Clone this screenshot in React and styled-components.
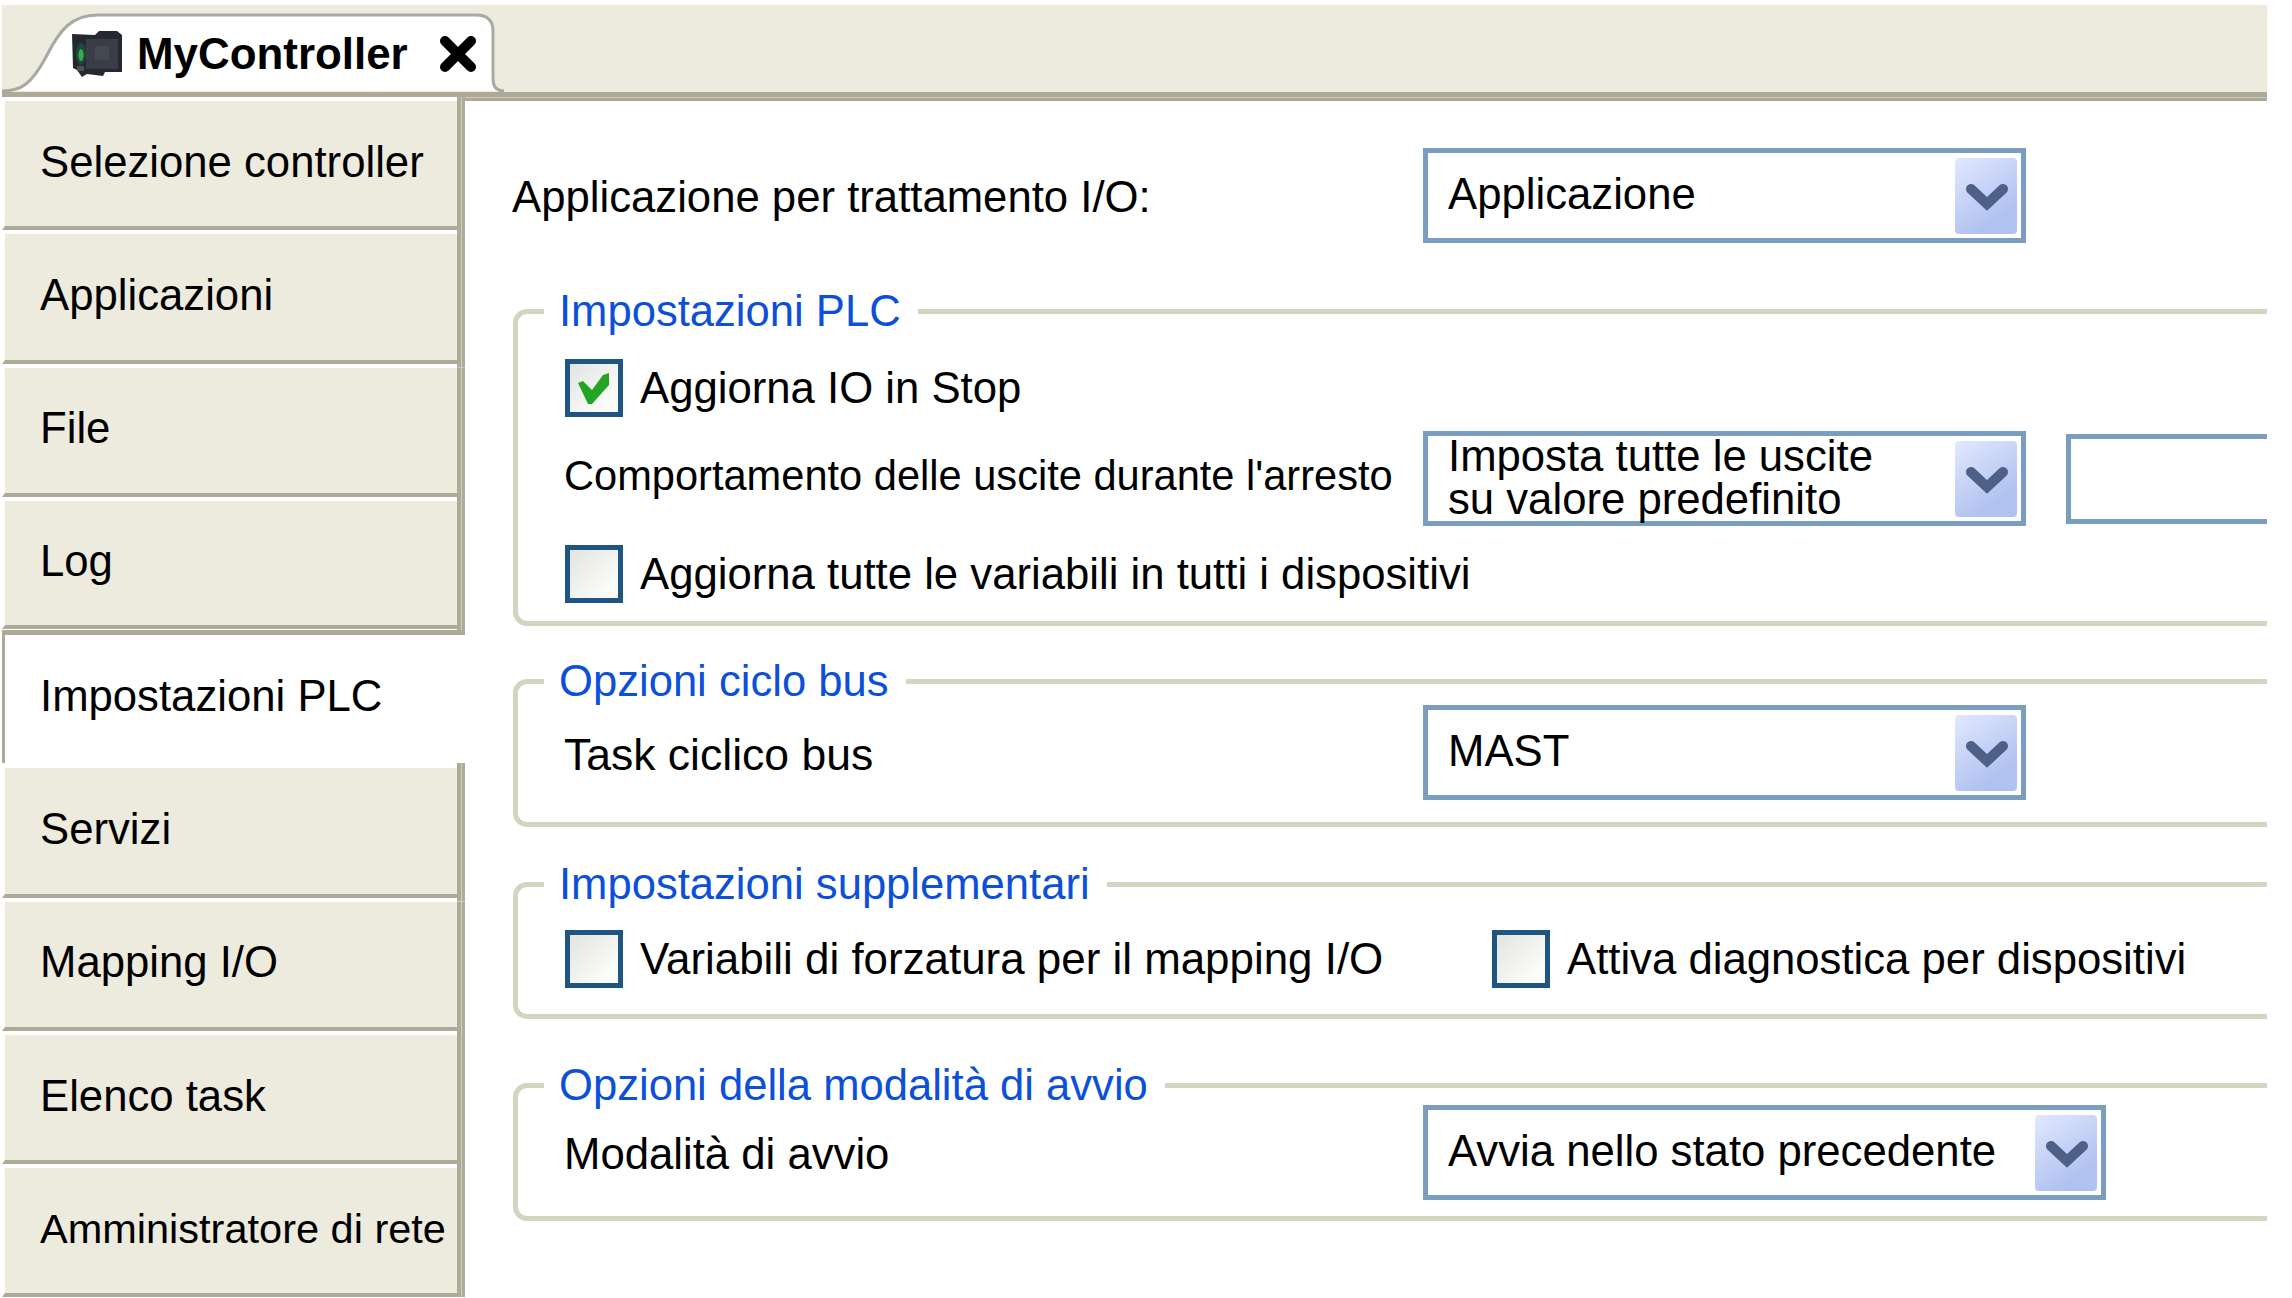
import React from "react";
import styled, { createGlobalStyle } from "styled-components";

const GlobalStyle = createGlobalStyle`
  html, body {
    margin: 0;
    padding: 0;
    background: #fff;
    font-family: "Liberation Sans", Arial, sans-serif;
    color: #000;
  }
`;

const Page = styled.div`
  width: 2267px;
  height: 1298px;
  overflow: hidden;
  padding-top: 5px;
  padding-left: 2px;
  box-sizing: border-box;
  font-size: 43.7px;
`;

const Header = styled.header`
  height: 92px;
  box-sizing: border-box;
  background: #edeade;
  border-bottom: 5px solid #aeaa98;
  display: flex;
  align-items: flex-end;
`;

const Tab = styled.div`
  position: relative;
  width: 503px;
  height: 79px;
  display: flex;
  align-items: center;
  padding: 3px 0 0 69px;
  box-sizing: border-box;
  font-weight: bold;
  font-size: 43.9px;

  > * {
    position: relative;
  }
`;

const TabShape = styled.svg`
  position: absolute !important;
  left: 0;
  top: 0;
`;

const TabTitle = styled.span`
  margin-left: 14px;
  margin-right: 32px;
  line-height: 1;
`;

const Body = styled.div`
  display: flex;
  height: 1201px;
`;

const Sidebar = styled.nav`
  width: 463px;
  flex: none;
  display: flex;
  flex-direction: column;
`;

const Row = styled.div`
  height: ${(p) => p.$height}px;
  padding: ${(p) => p.$top}px 8px ${(p) => p.$bottom}px 0;
  box-sizing: border-box;
  background: linear-gradient(to right, #aeaa98 0 4px, #cfcdc0 4px 5px, #aeaa98 5px) right / 8px 100% no-repeat;
  display: flex;
`;

const Cell = styled.div`
  flex: 1;
  min-width: 0;
  display: flex;
  align-items: center;
  padding: 0 0 4px 35px;
  background: #edeade;
  background-clip: padding-box;
  border-left: 3px solid transparent;
  border-bottom: 4px solid #aeaa98;
  white-space: nowrap;
  font-size: ${(p) => p.$size || 43.7}px;
`;

const ActiveCell = styled.div`
  height: 133px;
  box-sizing: border-box;
  display: flex;
  align-items: center;
  padding: 0 0 6px 35px;
  border-top: 5px solid #aeaa98;
  border-left: 3px solid #aeaa98;
  background: #fff;
`;

const Main = styled.main`
  flex: 1;
  min-width: 0;
  overflow: hidden;
  padding: 51px 0 0 48px;
  background: linear-gradient(#c9c7b9 0 1px, #aeaa98 1px 4px, #fff 4px);
`;

const TopRow = styled.div`
  display: grid;
  grid-template-columns: 910px auto;
  align-items: center;
  margin-bottom: 48px;

  > span {
    padding-top: 3px;
    margin-left: -1px;
  }
`;

const Group = styled.fieldset`
  margin: 0 0 ${(p) => p.$after}px;
  padding: ${(p) => p.$top}px 0 ${(p) => p.$bottom}px 47px;
  min-width: 0;
  border: 5px solid #d5d4c0;
  border-right: none;
  border-radius: 14px 0 0 14px;
`;

const Legend = styled.legend`
  margin-left: -21px;
  padding: 0 17px 0 15px;
  height: 40px;
  line-height: 40px;
  color: #0c50d9;
  font-size: 43.6px;
`;

const CheckRow = styled.div`
  display: flex;
  align-items: center;
  gap: 17px;
  margin-bottom: ${(p) => p.$after || 0}px;
`;

const CheckText = styled.span`
  font-size: ${(p) => p.$size || 43.7}px;
  white-space: nowrap;
`;

const CheckPair = styled.div`
  display: grid;
  grid-template-columns: 927px auto;
`;

const Box = styled.div`
  width: 58px;
  height: 58px;
  flex: none;
  box-sizing: border-box;
  border: 5px solid #1f5583;
  background: linear-gradient(135deg, #e3e3e1, #fbfbf9 80%);
  display: flex;
  align-items: center;
  justify-content: center;
`;

const FieldRow = styled.div`
  display: grid;
  grid-template-columns: 858px 603px auto;
  align-items: center;
  margin-bottom: ${(p) => p.$after || 0}px;
`;

const FieldLabel = styled.span`
  margin-left: -1px;
  padding-top: ${(p) => p.$down || 0}px;
  padding-bottom: ${(p) => p.$up || 0}px;
  white-space: nowrap;
  font-size: ${(p) => p.$size || 43.7}px;
`;

const Dropdown = styled.div`
  width: ${(p) => p.$width || 603}px;
  height: 95px;
  box-sizing: border-box;
  border: 5px solid #7a9dc0;
  display: flex;
  align-items: center;
  justify-content: space-between;
  padding: 0 4px 0 20px;
  background: #fff;
`;

const DropText = styled.div`
  line-height: 43px;
  padding-bottom: ${(p) => (p.$multi ? 3 : 4)}px;
  white-space: nowrap;
`;

const ArrowButton = styled.div`
  width: 62px;
  height: 76px;
  flex: none;
  border-radius: 4px;
  background: linear-gradient(145deg, #e2e9fe, #b2c2f0 75%);
  display: flex;
  align-items: center;
  justify-content: center;
`;

const BlankInput = styled.div`
  margin-left: 40px;
  height: 90px;
  width: 400px;
  box-sizing: border-box;
  border: 5px solid #7a9dc0;
`;

function Chevron() {
  return (
    <svg width="44" height="32" viewBox="0 0 44 32">
      <path
        d="M7 9 L23 24 L39 9"
        fill="none"
        stroke="#4e6088"
        strokeWidth="10"
        strokeLinecap="round"
        strokeLinejoin="miter"
      />
    </svg>
  );
}

function Check({ checked }) {
  return (
    <Box>
      {checked && (
        <svg width="48" height="48" viewBox="0 0 48 48">
          <polygon
            points="8,19 13,17 22,26 33,11 39,9 39,21 22,40 18,40"
            fill="#22a523"
          />
        </svg>
      )}
    </Box>
  );
}

function ControllerIcon() {
  return (
    <svg width="52" height="48" viewBox="0 0 52 48">
      <path
        d="M1 4 L24 5 L28 1 L46 1 L51 5 L51 42 L34 42 L32 46 L16 44 L11 47 L6 40 L2 38 Z"
        fill="#25282f"
      />
      <rect x="15" y="9" width="32" height="30" fill="#3a3d47" />
      <rect x="24" y="16" width="14" height="14" fill="#444853" />
      <ellipse cx="10" cy="24" rx="5" ry="11" fill="#1f4a3a" />
      <ellipse cx="10" cy="25" rx="2.5" ry="6" fill="#2fb04e" />
      <rect x="6" y="36" width="7" height="5" fill="#4a505a" />
    </svg>
  );
}

function CloseIcon() {
  return (
    <svg width="36" height="36" viewBox="0 0 36 36">
      <path
        d="M5 5 L31 31 M31 5 L5 31"
        stroke="#000"
        strokeWidth="10"
        strokeLinecap="round"
      />
    </svg>
  );
}

const navItems = [
  "Selezione controller",
  "Applicazioni",
  "File",
  "Log",
  "Impostazioni PLC",
  "Servizi",
  "Mapping I/O",
  "Elenco task",
  "Amministratore di rete",
];

// rows are 133.4 apart, the ones around the active tab swap their gap for its border
function rowMetrics(i) {
  if (i === 0) return { height: 137.4, top: 4, bottom: 4 };
  if (i === 3) return { height: 129.2, top: 0, bottom: 1 };
  if (i === 5) return { height: 138.2, top: 5, bottom: 4 };
  if (i === 8) return { height: 129, top: 0, bottom: 0 };
  return { height: 133.4, top: 0, bottom: 4 };
}

export default function App() {
  return (
    <Page>
      <GlobalStyle />
      <Header>
        <Tab>
          <TabShape width="503" height="79" viewBox="0 0 503 79">
            <path
              d="M0 78 C 20 78, 30 70, 44 44 C 58 16, 70 2, 96 2 L 474 2 Q 491 2 491 18 L 491 66 Q 491 78 502 78 Z"
              fill="#fff"
            />
            <path
              d="M0 78 C 20 78, 30 70, 44 44 C 58 16, 70 2, 96 2 L 474 2 Q 491 2 491 18 L 491 66 Q 491 78 502 78"
              fill="none"
              stroke="#a9a9a3"
              strokeWidth="3"
            />
          </TabShape>
          <ControllerIcon />
          <TabTitle>MyController</TabTitle>
          <CloseIcon />
        </Tab>
      </Header>
      <Body>
        <Sidebar>
          {navItems.map((item, i) => {
            if (i === 4) return <ActiveCell key={item}>{item}</ActiveCell>;
            const m = rowMetrics(i);
            return (
              <Row key={item} $height={m.height} $top={m.top} $bottom={m.bottom}>
                <Cell $size={i === 8 ? 41.5 : undefined}>{item}</Cell>
              </Row>
            );
          })}
        </Sidebar>
        <Main>
          <TopRow>
            <span>Applicazione per trattamento I/O:</span>
            <Dropdown>
              <DropText>Applicazione</DropText>
              <ArrowButton>
                <Chevron />
              </ArrowButton>
            </Dropdown>
          </TopRow>

          <Group $top={28} $bottom={18} $after={35}>
            <Legend>Impostazioni PLC</Legend>
            <CheckRow $after={14}>
              <Check checked />
              <CheckText>Aggiorna IO in Stop</CheckText>
            </CheckRow>
            <FieldRow $after={19}>
              <FieldLabel $size={41.6} $up={5}>
                Comportamento delle uscite durante l'arresto
              </FieldLabel>
              <Dropdown>
                <DropText $multi>
                  Imposta tutte le uscite
                  <br />
                  su valore predefinito
                </DropText>
                <ArrowButton>
                  <Chevron />
                </ArrowButton>
              </Dropdown>
              <BlankInput />
            </FieldRow>
            <CheckRow>
              <Check />
              <CheckText>Aggiorna tutte le variabili in tutti i dispositivi</CheckText>
            </CheckRow>
          </Group>

          <Group $top={4} $bottom={22} $after={37}>
            <Legend>Opzioni ciclo bus</Legend>
            <FieldRow>
              <FieldLabel $size={44.5} $down={5}>
                Task ciclico bus
              </FieldLabel>
              <Dropdown>
                <DropText>MAST</DropText>
                <ArrowButton>
                  <Chevron />
                </ArrowButton>
              </Dropdown>
            </FieldRow>
          </Group>

          <Group $top={26} $bottom={26} $after={46}>
            <Legend>Impostazioni supplementari</Legend>
            <CheckPair>
              <CheckRow>
                <Check />
                <CheckText $size={43.9}>Variabili di forzatura per il mapping I/O</CheckText>
              </CheckRow>
              <CheckRow>
                <Check />
                <CheckText>Attiva diagnostica per dispositivi</CheckText>
              </CheckRow>
            </CheckPair>
          </Group>

          <Group $top={0} $bottom={16} $after={0}>
            <Legend>Opzioni della modalità di avvio</Legend>
            <FieldRow>
              <FieldLabel $down={3}>Modalità di avvio</FieldLabel>
              <Dropdown $width={683}>
                <DropText>Avvia nello stato precedente</DropText>
                <ArrowButton>
                  <Chevron />
                </ArrowButton>
              </Dropdown>
            </FieldRow>
          </Group>
        </Main>
      </Body>
    </Page>
  );
}
